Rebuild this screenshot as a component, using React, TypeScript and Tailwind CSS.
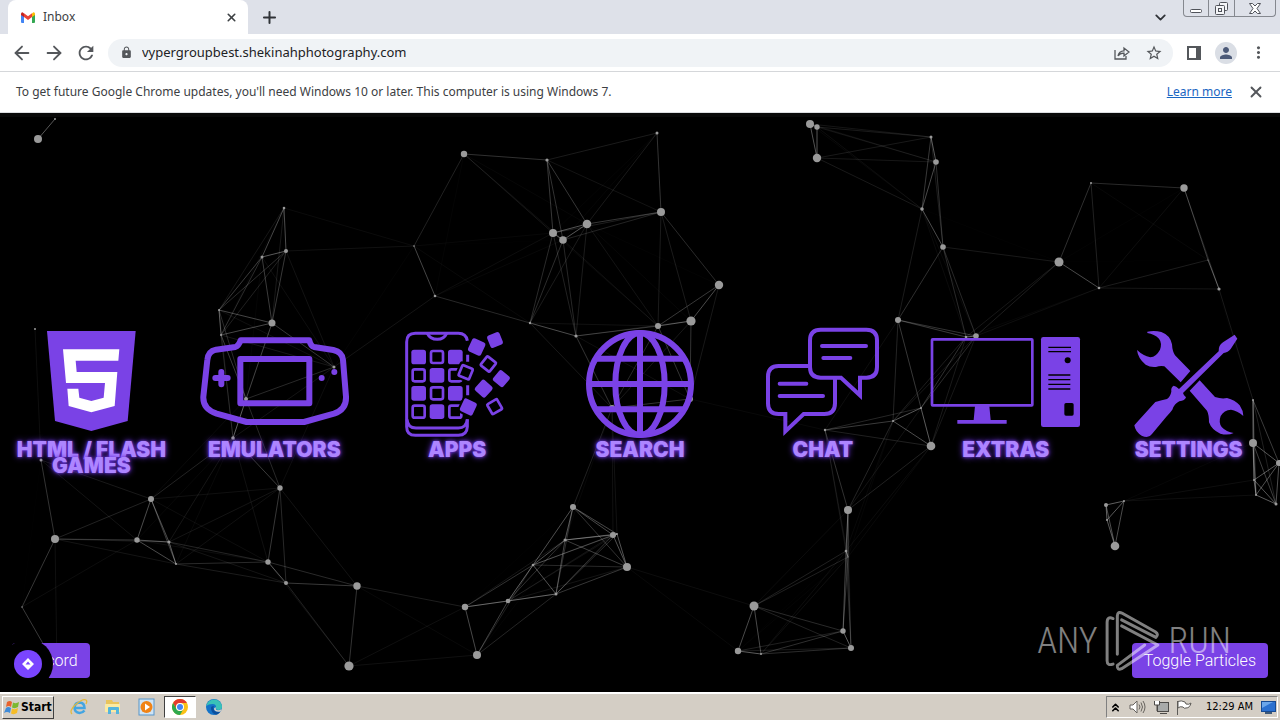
import type { ReactNode } from "react";
import {
  ArrowLeft,
  ArrowRight,
  ChevronDown,
  ChevronsUp,
  Plus,
  X,
} from "lucide-react";
import {
  MdLock,
  MdMoreVert,
  MdPerson,
  MdRefresh,
  MdStarOutline,
} from "react-icons/md";

const PURPLE = "#7a42e6";

// x, y, radius of every particle on the canvas
const PARTICLES: [number, number, number][] = [
  [464, 154, 3.2], [547, 160, 1.6], [657, 133, 1.5], [661, 212, 4], [587, 224, 4.3],
  [553, 233, 4], [563, 240, 3.8], [414, 246, 0.8], [435, 296, 1.3], [530, 323, 1.2],
  [576, 336, 1.6], [658, 326, 3], [691, 321, 4.6], [719, 285, 4.2],
  [810, 124, 4], [817, 127, 2.7], [817, 158, 4.2], [931, 137, 1.5], [936, 162, 2.8],
  [922, 209, 1.8], [943, 247, 2.8], [898, 320, 3], [966, 337, 1.3], [976, 336, 2.8],
  [1059, 262, 4.5], [1091, 183, 1], [1184, 188, 3.7], [1099, 288, 1.3], [1219, 289, 1.6],
  [1208, 260, 0.5], [38, 139, 4], [55, 119, 1], [284, 208, 1.3], [286, 251, 2],
  [262, 257, 1.5], [219, 310, 1], [221, 335, 1], [272, 323, 3.5], [334, 367, 1.5],
  [246, 399, 2], [233, 438, 1.8], [35, 329, 1], [41, 460, 1.5], [151, 499, 3],
  [55, 539, 4], [137, 540, 2.7], [169, 542, 1.5], [176, 564, 1], [280, 488, 2.7],
  [268, 562, 2.7], [286, 583, 2], [357, 586, 3.7], [349, 666, 4.6], [22, 607, 0.7],
  [57, 668, 1], [573, 507, 3], [565, 540, 1.5], [613, 535, 3], [617, 534, 1],
  [627, 567, 4], [533, 565, 1.3], [556, 594, 1.5], [508, 601, 2.3], [465, 607, 3.2],
  [477, 655, 4], [754, 606, 4.5], [738, 651, 3.2], [761, 654, 1], [843, 631, 2.7],
  [851, 648, 3], [848, 510, 4], [846, 551, 1.3], [848, 557, 0.5], [825, 430, 1.2],
  [893, 421, 1], [921, 408, 1], [931, 446, 4.3], [612, 408, 3], [690, 399, 3],
  [1253, 400, 1], [1253, 443, 4], [1279, 463, 3], [1254, 480, 1], [1256, 495, 1],
  [1276, 504, 1.5], [1106, 505, 2], [1124, 501, 1], [1107, 520, 1], [1115, 546, 4.3],
];

const LINK_DISTANCE = 150;

function Particles() {
  const links: ReactNode[] = [];
  PARTICLES.forEach(([x1, y1], i) => {
    PARTICLES.slice(i + 1).forEach(([x2, y2], j) => {
      const d = Math.hypot(x2 - x1, y2 - y1);
      if (d < LINK_DISTANCE) {
        links.push(
          <line key={`${i}-${j}`} x1={x1} y1={y1} x2={x2} y2={y2} opacity={0.42 * (1 - d / LINK_DISTANCE)} />,
        );
      }
    });
  });
  return (
    <svg
      aria-hidden="true"
      className="absolute inset-0 h-full w-full"
      viewBox="0 117 1280 575"
      preserveAspectRatio="xMidYMid slice"
    >
      <g stroke="#fff" strokeWidth="1">{links}</g>
      <g fill="#9a9a9a">
        {PARTICLES.map(([x, y, r]) => (
          <circle key={`${x}-${y}`} cx={x} cy={y} r={r} />
        ))}
      </g>
    </svg>
  );
}

function MenuIcon({ viewBox, children }: { viewBox: string; children: ReactNode }) {
  return (
    <svg aria-hidden="true" viewBox={viewBox} className="h-28 w-[150px] overflow-visible">
      {children}
    </svg>
  );
}

function Html5Icon() {
  return (
    <MenuIcon viewBox="49 51 450 336">
      <polygon fill={PURPLE} points="142,63 408,63 384,333 275,363 166,333" />
      <polygon
        fill="#fff"
        points="190,118 359,118 356,152 228,152 231,186 353,186 345,288 275,307 207,288 203,236 236,236 239,263 275,273 312,263 316,219 199,219"
      />
    </MenuIcon>
  );
}

function ConsoleIcon() {
  return (
    <MenuIcon viewBox="597 51 450 336">
      <g fill="none" stroke={PURPLE} strokeWidth="18" strokeLinejoin="round" strokeLinecap="round">
        <path d="M722 91H928Q932 108 942 111L1000 120Q1027 126 1029 150L1038 260Q1040 298 1002 311L912 336H740L650 311Q608 297 610 260L622 150Q624 124 648 119L706 111Q716 108 722 91Z" />
        <rect x="721" y="147" width="207" height="133" />
        <path d="M664 186V223M646 204H683" />
      </g>
      <circle cx="965" cy="204" r="9" fill={PURPLE} />
      <circle cx="1003" cy="186" r="9" fill={PURPLE} />
    </MenuIcon>
  );
}

// centre x, centre y, size, rotation, filled
const FLYING_TILES: [number, number, number, number, boolean][] = [
  [320, 111, 43, 25, true],
  [375, 90, 40, -22, true],
  [355, 162, 42, 38, false],
  [287, 187, 42, 22, false],
  [394, 206, 40, 40, true],
  [341, 236, 42, 42, true],
  [295, 291, 42, 25, true],
  [374, 290, 42, -30, false],
];

function AppsIcon() {
  return (
    <MenuIcon viewBox="36 51 450 336">
      <g fill="none" stroke={PURPLE} strokeWidth="9">
        <path d="M292 328V350Q291 376 265 376H136Q110 376 110 350V96Q110 70 136 70H265Q288 70 292 92" />
        <path d="M172 70Q180 88 202 88Q222 88 230 70M111 328Q113 354 138 354H265Q289 354 292 328M293 134V155M293 226V256" />
      </g>
      {[119, 174, 228, 283].map((y, row) =>
        [124, 179, 234].map((x, col) =>
          (row + col) % 2 === 0 ? (
            <rect key={`${x}-${y}`} x={x} y={y} width="44" height="44" rx="8" fill={PURPLE} />
          ) : (
            <rect key={`${x}-${y}`} x={x + 4} y={y + 4} width="36" height="36" rx="6" fill="none" stroke={PURPLE} strokeWidth="8" />
          ),
        ),
      )}
      {FLYING_TILES.map(([x, y, size, turn, filled]) => (
        <g key={`${x}-${y}`} transform={`translate(${x} ${y}) rotate(${turn})`}>
          <rect x={-size / 2 - 6} y={-size / 2 - 6} width={size + 12} height={size + 12} rx="8" />
          {filled ? (
            <rect x={-size / 2} y={-size / 2} width={size} height={size} rx="7" fill={PURPLE} />
          ) : (
            <rect x={4 - size / 2} y={4 - size / 2} width={size - 8} height={size - 8} rx="3" fill="none" stroke={PURPLE} strokeWidth="8" />
          )}
        </g>
      ))}
    </MenuIcon>
  );
}

function GlobeIcon() {
  return (
    <MenuIcon viewBox="585 51 450 336">
      <g fill="none" stroke={PURPLE} strokeWidth="18">
        <circle cx="810" cy="222" r="153" />
        <ellipse cx="810" cy="222" rx="74" ry="153" />
        <path d="M810 69V375M657 222H963M677 146H943M677 298H943" />
      </g>
    </MenuIcon>
  );
}

function ChatIcon() {
  return (
    <MenuIcon viewBox="24 51 450 336">
      <g fill="none" stroke={PURPLE} strokeWidth="12">
        <path d="M242 59H379Q411 59 411 91V171Q411 203 379 203H360V256L303 203H242Q210 203 210 171V91Q210 59 242 59Z" />
        <path d="M206 168H116Q84 168 84 200V280Q84 312 116 312H136V364L191 312H253Q285 312 285 280V206" />
        <path strokeLinecap="round" d="M246 108H378M250 144H331M119 221H199M119 258H249" />
      </g>
    </MenuIcon>
  );
}

function ComputerIcon() {
  return (
    <MenuIcon viewBox="574 51 450 336">
      <rect x="577" y="88" width="301" height="198" rx="2" fill="none" stroke={PURPLE} strokeWidth="8" />
      <path fill={PURPLE} d="M706 288H749L753 330H801V341H653V330H702Z" />
      <rect x="904" y="81" width="117" height="270" rx="7" fill={PURPLE} />
      <path stroke="#000" strokeWidth="4" d="M926 112H994M926 125H994M926 195H992M926 209H992M926 223H992M926 237H992" />
      <circle cx="984" cy="151" r="9" />
      <rect x="974" y="279" width="28" height="38" rx="5" />
    </MenuIcon>
  );
}

function ToolsIcon() {
  return (
    <MenuIcon viewBox="101 51 450 336">
      <g fill={PURPLE}>
        <path d="M201 65Q222 60 243 66Q270 76 275 103Q276 124 284 136L330 183L301 217L252 169Q240 166 227 171Q210 173 196 164Q173 146 170 120Q188 137 210 142Q228 140 239 119Q246 99 236 86Q222 72 201 69Z" />
        <path d="M358 211L404 261Q425 268 440 264Q464 270 478 286Q489 302 489 318Q470 301 452 299Q431 300 421 318Q414 338 424 351Q438 366 460 369Q443 377 420 371Q394 360 386 337Q386 314 380 302L328 242Z" />
        <path d="M463 74L471 86L451 117Q443 128 430 129L308 249Q309 254 317 262Q314 272 297 274Q282 281 276 299Q268 310 258 320L215 372Q205 387 184 377Q165 366 162 346L174 332L225 276Q246 270 260 267Q270 260 273 245Q271 231 280 227Q287 228 296 237L415 124Q414 106 428 97Z" />
      </g>
    </MenuIcon>
  );
}

const MENU = [
  { label: "HTML / Flash Games", icon: <Html5Icon /> },
  { label: "Emulators", icon: <ConsoleIcon /> },
  { label: "Apps", icon: <AppsIcon /> },
  { label: "Search", icon: <GlobeIcon /> },
  { label: "Chat", icon: <ChatIcon /> },
  { label: "Extras", icon: <ComputerIcon /> },
  { label: "Settings", icon: <ToolsIcon /> },
];

function GmailIcon() {
  return (
    <svg aria-hidden="true" viewBox="0 0 14 11" className="h-[11px] w-3.5">
      <path fill="#4285f4" d="M0 2V10Q0 11 1 11H3V4Z" />
      <path fill="#34a853" d="M14 2V10Q14 11 13 11H11V4Z" />
      <path fill="#fbbc04" d="M11 1.5V5L14 3V1.8Q14 .2 12.400 .3Z" />
      <path fill="#c5221f" d="M0 1.800V3L3 5V1.500L1.500 .2Q0 .2 0 1.800Z" />
      <path fill="#ea4335" d="M3 1.300L7 4.300L11 1.300V5L7 8L3 5Z" />
    </svg>
  );
}

function TabStrip() {
  return (
    <div className="flex h-[34px] items-start bg-[#dee1e9] pl-2">
      <div className="flex h-full w-60 items-center rounded-t-lg bg-white pl-[13px] pr-2.5">
        <GmailIcon />
        <span className="ml-2 flex-1 text-[12px] text-[#3c4043]">Inbox</span>
        <button type="button" aria-label="Close tab" className="text-[#3c4043]">
          <X size={13} strokeWidth={3} />
        </button>
      </div>
      <button type="button" aria-label="New tab" className="ml-3 flex h-full items-center text-[#303338]">
        <Plus size={19} strokeWidth={2.5} />
      </button>
      <button type="button" aria-label="Search tabs" className="ml-auto mr-3.5 flex h-full items-center text-[#303338]">
        <ChevronDown size={17} strokeWidth={2.5} />
      </button>
      <div className="mr-1 flex h-[17px] w-[93px] rounded-b border border-t-0 border-[#85888f] text-[#50535a]">
        <button type="button" aria-label="Minimize" className="flex w-[25px] items-center justify-center border-r border-[#85888f]">
          <svg viewBox="0 0 12 12" className="size-3">
            <rect x=".5" y="7.500" width="11" height="3" rx="1" fill="#fff" stroke="currentColor" />
          </svg>
        </button>
        <button type="button" aria-label="Restore" className="flex w-[26px] items-center justify-center border-r border-[#85888f]">
          <svg viewBox="0 0 13 13" className="size-[13px]" fill="#f4f5f8" stroke="currentColor">
            <rect x="4.500" y=".5" width="8" height="8" rx="1" />
            <rect x=".5" y="3.500" width="9" height="9" rx="1" />
            <rect x="3.500" y="6.500" width="3" height="3" />
          </svg>
        </button>
        <button type="button" aria-label="Close window" className="flex flex-1 items-center justify-center">
          <svg viewBox="0 0 12 11" className="h-[11px] w-3">
            <path d="M.5 .5H3.500L6 3L8.500 .5H11.500L8 5.500L11.500 10.500H8.500L6 8L3.500 10.500H.5L4 5.500Z" fill="#fff" stroke="currentColor" />
          </svg>
        </button>
      </div>
    </div>
  );
}

function Toolbar() {
  return (
    <div className="flex h-[38px] items-center border-b border-[#d5d7da] bg-white pl-[11px] pr-3 text-[#54575b]">
      <button type="button" aria-label="Back">
        <ArrowLeft size={22} strokeWidth={2} />
      </button>
      <button type="button" aria-label="Forward" className="ml-2.5">
        <ArrowRight size={22} strokeWidth={2} />
      </button>
      <button type="button" aria-label="Reload" className="ml-2.5">
        <MdRefresh size={22} />
      </button>
      <div className="ml-[11px] flex h-7 flex-1 items-center rounded-full bg-[#f0f3f6] pl-3 pr-2.5">
        <MdLock size={13} />
        <input
          aria-label="Address"
          defaultValue="vypergroupbest.shekinahphotography.com"
          className="ml-[9px] min-w-0 flex-1 bg-transparent text-[13px] text-[#202124] outline-none"
        />
        <button type="button" aria-label="Share">
          <svg viewBox="0 0 16 14" className="h-3.5 w-4" fill="none" stroke="currentColor" strokeWidth="1.300">
            <path d="M1 4V13H12V10M4 10Q5 5 10 4.800V2L15 6L10 10V7.200Q6 7 4 10Z" />
          </svg>
        </button>
        <button type="button" aria-label="Bookmark" className="ml-[15px]">
          <MdStarOutline size={18} />
        </button>
      </div>
      <button type="button" aria-label="Side panel" className="ml-3.5">
        <svg viewBox="0 0 14 14" className="size-3.5">
          <rect x="1" y="1" width="12" height="12" fill="none" stroke="currentColor" strokeWidth="2" />
          <rect x="9" y="1" width="4" height="12" fill="currentColor" />
        </svg>
      </button>
      <button type="button" aria-label="Profile" className="ml-3.5 flex size-[22px] items-center justify-center rounded-full bg-[#dadee5] text-[#4c5a78]">
        <MdPerson size={18} />
      </button>
      <button type="button" aria-label="Menu" className="ml-3">
        <MdMoreVert size={19} />
      </button>
    </div>
  );
}

function UpdateBar() {
  return (
    <div className="flex h-[41px] items-center border-b border-[#dcdee1] bg-white pr-[15px] pl-4 text-[12px] text-[#3c4043]">
      <p className="flex-1">
        To get future Google Chrome updates, you'll need Windows 10 or later. This computer is using Windows 7.
      </p>
      <a href="#learn" className="text-[#1a66c2] underline">
        Learn more
      </a>
      <button type="button" aria-label="Dismiss" className="ml-[15px] text-[#54575b]">
        <X size={18} strokeWidth={2.5} />
      </button>
    </div>
  );
}

function Watermark() {
  return (
    <div className="pointer-events-none absolute right-[49px] bottom-5 flex items-center gap-2 font-['Roboto_Condensed','Liberation_Sans_Narrow',Roboto,sans-serif] text-[36px] leading-none font-light text-white opacity-50">
      <span>ANY</span>
      <svg aria-hidden="true" viewBox="448 58 166 188" className="h-[62px] w-[55px]" fill="none" stroke="#fff" strokeWidth="9" strokeLinejoin="round" strokeLinecap="round">
        <path d="M472 84Q454 76 454 96V212Q454 228 472 222" />
        <path d="M485 192V76Q486 60 500 68L600 124Q612 132 602 141L498 88" />
        <path d="M498 106L608 164L498 236Q484 242 485 226L568 164" />
      </svg>
      <span>RUN</span>
    </div>
  );
}

function Stage() {
  return (
    <main className="relative flex flex-1 items-center overflow-hidden border-t-4 border-[#090909] bg-black pb-2">
      <Particles />
      <nav className="relative grid w-full grid-cols-7 items-start">
        {MENU.map(({ label, icon }) => (
          <a key={label} href="#menu" className="flex flex-col items-center">
            {icon}
            <span className="mt-[3px] px-3 text-center font-[Inter,sans-serif] text-[21px] leading-4 font-black text-[#ad85ff] uppercase [text-shadow:0_0_6px_#6d35e0,0_0_3px_#6d35e0]">
              {label}
            </span>
          </a>
        ))}
      </nav>
      <button type="button" className="absolute bottom-3.5 left-3 h-[35px] rounded bg-[#7a42e6] px-3 font-[Roboto,sans-serif] text-[16px] font-light text-white">
        Discord
      </button>
      <button
        type="button"
        aria-label="Open panel"
        className="absolute bottom-[3px] left-[3px] flex size-[50px] items-center justify-center rounded-full bg-black"
      >
        <span className="flex size-7 items-center justify-center rounded-full bg-[#7a45ff]">
          <svg viewBox="0 0 12 12" className="size-3">
            <path fill="#fff" fillRule="evenodd" d="M6 0L12 6L6 12L0 6ZM6 3.500L3.500 6.500H8.500Z" />
          </svg>
        </span>
      </button>
      <button type="button" className="absolute right-3 bottom-3.5 h-[35px] rounded bg-[#7a42e6] px-3 font-[Roboto,sans-serif] text-[16px] font-light text-white">
        Toggle Particles
      </button>
      <Watermark />
    </main>
  );
}

function WindowsFlag() {
  return (
    <svg aria-hidden="true" viewBox="0 0 16 15" className="h-[15px] w-4">
      <path fill="#e8622c" d="M3 2Q6 0 8 2L7 7Q5 5 2 7Z" />
      <path fill="#7cb82f" d="M9 2.500Q12 4 15 2L14 7Q11 9 8 7.500Z" />
      <path fill="#3f8bd8" d="M2 8Q4 6 7 8L6 13Q3 11 0 13Z" />
      <path fill="#f6bd27" d="M8 8.500Q11 10 14 8L13 13Q10 15 7 13.500Z" />
    </svg>
  );
}

function ExplorerE() {
  return (
    <svg aria-hidden="true" viewBox="0 0 18 18" className="size-[18px]" fill="none">
      <path d="M14.500 12.500Q12.500 15 9.500 15Q4.500 14.500 4.500 9.500Q5 4.500 9.500 4.500Q14.500 4.800 14.500 10H5" stroke="#43a5e2" strokeWidth="2.500" />
      <path d="M2 16Q-1 13 5 7Q13 0 16 2Q17.500 3 16 6" stroke="#e5b93c" strokeWidth="1.300" />
    </svg>
  );
}

function FolderIcon() {
  return (
    <svg aria-hidden="true" viewBox="0 0 18 18" className="size-[18px]">
      <path fill="#e9c45c" d="M2 2H8L9 4H15V14H2Z" />
      <path fill="#fbeaa2" d="M1 6H16V14H1Z" />
      <path fill="#54b5dd" d="M4 10Q4 9 5 9H14Q15 9 15 10V16H12V12H7V16H4Z" />
    </svg>
  );
}

function MediaIcon() {
  return (
    <svg aria-hidden="true" viewBox="0 0 18 18" className="size-[18px]">
      <rect x="1" y="1" width="15" height="16" fill="#cfe4f5" stroke="#5795ca" />
      <circle cx="8.500" cy="9" r="6" fill="#f08316" />
      <path fill="#fff" d="M7 5.500L12 9L7 12.500Z" />
    </svg>
  );
}

function ChromeIcon() {
  return (
    <svg aria-hidden="true" viewBox="0 0 16 16" className="size-4">
      <circle cx="8" cy="8" r="8" fill="#fbc116" />
      <path fill="#e33b2e" d="M1.070 4A8 8 0 0 1 14.930 4H8A4 4 0 0 0 4.540 10Z" />
      <path fill="#2da94f" d="M1.070 4A8 8 0 0 0 8 16L11.460 10A4 4 0 0 1 4.540 10Z" />
      <circle cx="8" cy="8" r="4" fill="#fff" />
      <circle cx="8" cy="8" r="3" fill="#4285f4" />
    </svg>
  );
}

function EdgeIcon() {
  return (
    <svg aria-hidden="true" viewBox="0 0 16 16" className="size-4">
      <circle cx="8" cy="8" r="8" fill="#1473c8" />
      <path fill="#39c2b8" d="M.2 7A8 8 0 0 1 16 7.500Q16 11 12 11Q9.500 10.500 10 9Q10.500 5 6.500 5Q2.500 5 .2 7Z" />
      <path fill="#0b4f9e" d="M5 9Q5 14 10 15.700A8 8 0 0 0 14.500 12.500Q9 14 7.500 10Q7 8 8 7Q5 7 5 9Z" />
      <path fill="#d4d0c8" d="M10 8.500Q9 11 12 11.300Q14 11.300 15.500 10L14.600 12.400Q9 13.500 8 10Q8 8 10 8.500Z" />
    </svg>
  );
}

function Taskbar() {
  return (
    <footer className="flex h-7 items-center border-t-2 border-white bg-[#d4cec5] px-0.5 text-black">
      <button
        type="button"
        className="flex h-[23px] items-center gap-px border border-t-white border-r-[#404040] border-b-[#404040] border-l-white px-px font-['DejaVu_Sans_Condensed','DejaVu_Sans',sans-serif] text-[12px] font-bold"
      >
        <WindowsFlag />
        Start
      </button>
      <div className="ml-4 flex items-center gap-4">
        <button type="button" aria-label="Internet Explorer"><ExplorerE /></button>
        <button type="button" aria-label="Explorer"><FolderIcon /></button>
        <button type="button" aria-label="Media Player"><MediaIcon /></button>
      </div>
      <button
        type="button"
        aria-label="Chrome"
        className="ml-2 flex h-[22px] w-8 items-center justify-center border border-t-[#404040] border-r-white border-b-white border-l-[#404040] bg-white"
      >
        <ChromeIcon />
      </button>
      <button type="button" aria-label="Edge" className="ml-2.5"><EdgeIcon /></button>
      <div className="ml-auto flex h-[22px] items-center border border-t-[#808080] border-r-white border-b-white border-l-[#808080] pl-0.5">
        <button type="button" aria-label="Show hidden icons">
          <ChevronsUp size={13} strokeWidth={3} />
        </button>
        <svg aria-hidden="true" viewBox="0 0 17 14" className="ml-[7px] h-3.5 w-[17px]" fill="none" stroke="#66635e">
          <path fill="#fff" d="M1 5H4L8 1V13L4 9H1Z" />
          <path d="M10 4.500Q12 7 10 9.500M12 2.500Q15 7 12 11.500M14 1Q18 7 14 13" />
        </svg>
        <svg aria-hidden="true" viewBox="0 0 16 15" className="ml-[7px] h-[15px] w-4" stroke="#4d4b48">
          <rect x="4.500" y="2.500" width="11" height="9" fill="#a8aaa9" />
          <path fill="#fff" d="M1.500 1V5H6.500V1M4 5V11M7 13.500H14" />
        </svg>
        <svg aria-hidden="true" viewBox="0 0 16 15" className="ml-[7px] h-[15px] w-4" fill="#fff" stroke="#5d5b57">
          <path d="M1.500 1V15M2 1.500Q5 0 9 2L10 4Q13 5 15 3Q14 8 10 8Q8 9 7 7Q4 6 2 8Z" />
        </svg>
        <time className="ml-3.5 font-['DejaVu_Sans_Condensed','DejaVu_Sans',sans-serif] text-[11px]">12:29 AM</time>
        <svg aria-hidden="true" viewBox="0 0 15 13" className="mr-px ml-2 h-[13px] w-[15px]">
          <rect x=".5" y=".5" width="14" height="10" fill="#2b70cf" stroke="#164a93" />
          <path fill="#6ba6ea" d="M1 1H12L1 7Z" />
          <rect x="4" y="11" width="7" height="2" fill="#3d5878" />
        </svg>
      </div>
    </footer>
  );
}

export default function App() {
  return (
    <div className="flex min-h-screen flex-col font-['Noto_Sans',sans-serif]">
      <header>
        <TabStrip />
        <Toolbar />
        <UpdateBar />
      </header>
      <Stage />
      <Taskbar />
    </div>
  );
}
